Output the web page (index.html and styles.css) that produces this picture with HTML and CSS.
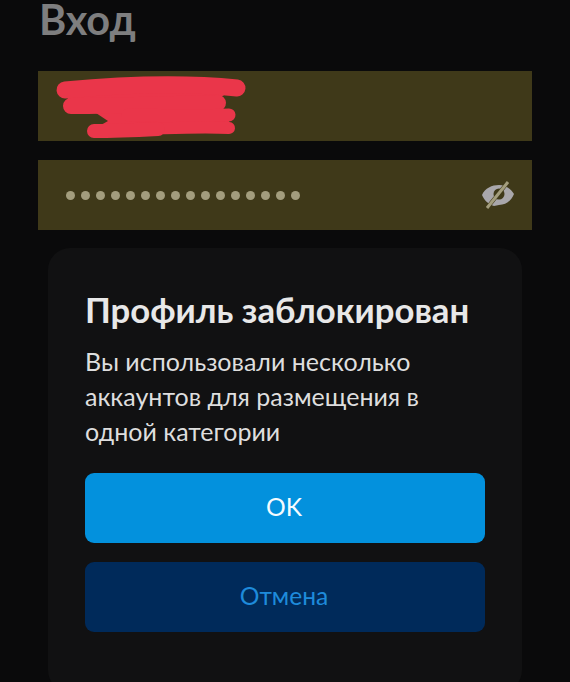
FILE: index.html
```html
<!DOCTYPE html>
<html lang="ru">
<head>
<meta charset="utf-8">
<title>Вход</title>
<link rel="stylesheet" href="styles.css">
</head>
<body>
<main class="page">
  <h1 class="title">Вход</h1>
  <div class="fields">
    <div class="field field-login">
      <svg class="scribble" width="215" height="70" viewBox="0 0 215 70" aria-hidden="true">
        <path class="scribble-fill" d="M27 16 L199 16 L183 26 L183 44 L191 50 L190 58 L56 58 L70 50 L58 42 L33 40 Z"/>
        <path class="scribble-line s17" d="M27 19 C80 14 140 11 199 17"/>
        <path class="scribble-line s16" d="M33 35 C80 35 130 33 180 32"/>
        <path class="scribble-line s13" d="M90 44 C120 44 160 46 191 44"/>
        <path class="scribble-line s12" d="M93 58 C120 58 160 55 191 57"/>
        <path class="scribble-line s14" d="M56 60 C80 60 100 59 120 58"/>
      </svg>
    </div>
    <div class="field field-password">
      <div class="dots">
        <span class="dot"></span><span class="dot"></span><span class="dot"></span><span class="dot"></span>
        <span class="dot"></span><span class="dot"></span><span class="dot"></span><span class="dot"></span>
        <span class="dot"></span><span class="dot"></span><span class="dot"></span><span class="dot"></span>
        <span class="dot"></span><span class="dot"></span><span class="dot"></span><span class="dot"></span>
      </div>
      <svg class="eye" width="34" height="32" viewBox="0 0 34 32" aria-hidden="true">
        <path class="eye-body" d="M1 16 C4 9 11 6 18 6 C25 6 30 10 33 15 C30 22 25 26 18 26 L13 27 C7 25 3 21 1 16 Z"/>
        <circle class="eye-pupil" cx="18" cy="15" r="5.5"/>
        <path class="eye-slash-gap" d="M27 3 L6 29"/>
        <path class="eye-slash" d="M27 3 L6 29"/>
      </svg>
    </div>
  </div>
  <section class="card">
    <h2 class="card-title">Профиль заблокирован</h2>
    <p class="card-text">Вы использовали несколько аккаунтов для размещения в одной категории</p>
    <div class="actions">
      <button class="btn btn-primary" type="button">OK</button>
      <button class="btn btn-secondary" type="button">Отмена</button>
    </div>
  </section>
</main>
</body>
</html>
```
FILE: styles.css
```css
html, body {
  margin: 0;
  height: 682px;
  overflow: hidden;
  background: #0a0a0b;
}
.page {
  font-family: Lato, "Noto Sans", sans-serif;
  display: flex;
  flex-direction: column;
}
.title {
  margin: 0;
  padding: 0 0 0 39px;
  height: 71px;
  font-size: 41.5px;
  line-height: 38px;
  font-weight: 700;
  color: #7e7e7f;
}
.fields {
  display: flex;
  flex-direction: column;
  gap: 19px;
  margin: 0 38px;
}
.field {
  position: relative;
  height: 70px;
  background: #3f3919;
  display: flex;
  align-items: center;
}
.scribble {
  position: absolute;
  left: 0;
  top: 0;
}
.scribble-fill { fill: #ea364a; }
.scribble-line {
  fill: none;
  stroke: #ea364a;
  stroke-linecap: round;
}
.s17 { stroke-width: 17; }
.s16 { stroke-width: 16; }
.s14 { stroke-width: 14; }
.s13 { stroke-width: 13; }
.s12 { stroke-width: 12; }
.field-password {
  justify-content: space-between;
  padding: 0 17px 0 28px;
}
.dots {
  display: flex;
  gap: 6px;
}
.dot {
  width: 9px;
  height: 9px;
  border-radius: 50%;
  background: #a39d7d;
}
.eye { flex: none; }
.eye-body { fill: #a9a7ab; }
.eye-pupil { fill: #3f3919; }
.eye-slash-gap {
  fill: none;
  stroke: #3f3919;
  stroke-width: 4;
}
.eye-slash {
  fill: none;
  stroke: #a39d7d;
  stroke-width: 3;
}
.card {
  margin: 18px 48px 0;
  padding: 43px 37px 60px;
  background: #111112;
  border-radius: 22px;
}
.card-title {
  margin: 0 0 15px;
  font-size: 34.7px;
  line-height: 38px;
  font-weight: 700;
  color: #e8e8e8;
}
.card-text {
  margin: 0 0 24px;
  font-size: 25px;
  line-height: 35px;
  color: #dedede;
}
.actions {
  display: flex;
  flex-direction: column;
  gap: 19px;
}
.btn {
  height: 70px;
  border: 0;
  border-radius: 9px;
  font-family: inherit;
  font-size: 24.6px;
  padding: 0 2px 3px 0;
}
.btn-primary {
  background: #0391dd;
  color: #f5fbff;
}
.btn-secondary {
  background: #002a5a;
  color: #1e8bdb;
}
```
